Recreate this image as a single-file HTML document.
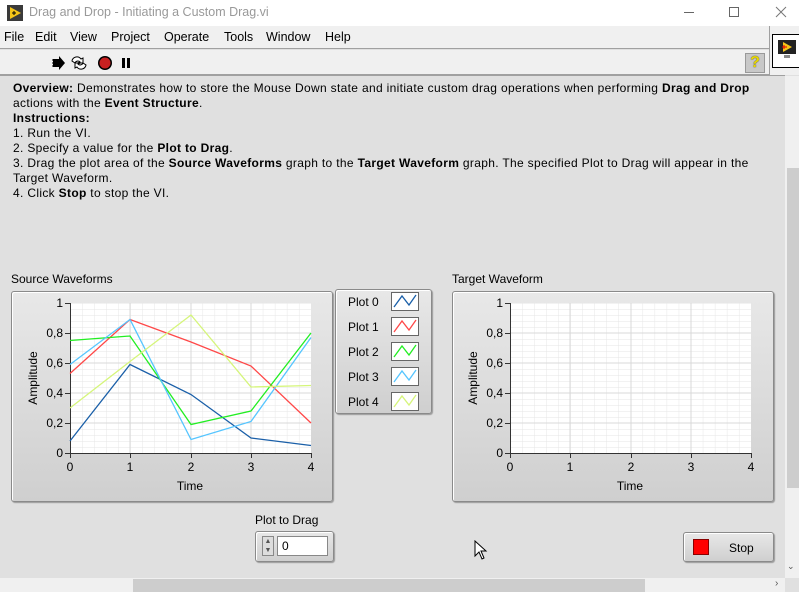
<!DOCTYPE html>
<html><head><meta charset="utf-8"><style>
*{margin:0;padding:0;box-sizing:border-box}
body{width:799px;height:592px;overflow:hidden;background:#e0e0e0;font-family:"Liberation Sans",sans-serif;font-size:12px;color:#000;position:relative}
.abs{position:absolute}
#title{left:0;top:0;width:799px;height:26px;background:#fff}
#menu{left:0;top:26px;width:769px;height:23px;background:#f0f0f0;border-bottom:1px solid #a0a0a0}
#menu span{position:absolute;top:4px;font-size:12.5px}
#tool{left:0;top:50px;width:769px;height:25px;background:#f0f0f0;border-bottom:1px solid #a0a0a0}
.txt{left:13px;top:81px;width:780px;line-height:15px;font-size:12px;letter-spacing:0.33px;white-space:nowrap}
.frame{border:1px solid #8a8a8a;border-radius:3px;background:linear-gradient(#e8e8e8,#cfcfcf);box-shadow:inset 1px 1px 0 #fff,1px 1px 1px #999}
</style></head><body>
<div id="title" class="abs">
 <svg class="abs" style="left:7px;top:5px" width="16" height="16"><rect width="16" height="16" fill="#3a3a3a"/><polygon points="3,2 14,8 3,14" fill="#f5c518"/><path d="M5 8h4M7 6v4" stroke="#000" stroke-width="1"/></svg>
 <div class="abs" style="left:29px;top:5px;color:#999;font-size:12.5px">Drag and Drop - Initiating a Custom Drag.vi</div>
 <div class="abs" style="left:684px;top:12px;width:10px;height:1px;background:#666"></div>
 <div class="abs" style="left:729px;top:7px;width:10px;height:10px;border:1px solid #666"></div>
 <svg class="abs" style="left:775px;top:6px" width="12" height="12"><path d="M1 1L11 11M11 1L1 11" stroke="#777"/></svg>
</div>
<div id="menu" class="abs">
 <span style="left:4px">File</span><span style="left:35px">Edit</span><span style="left:70px">View</span><span style="left:111px">Project</span><span style="left:164px">Operate</span><span style="left:224px">Tools</span><span style="left:266px">Window</span><span style="left:325px">Help</span>
</div>
<div id="tool" class="abs">
 <svg class="abs" style="left:50px;top:4px" width="90" height="18">
  <path d="M3 5h6V2l6 7-6 7v-3H3z" fill="#000"/>
  <path d="M2 6h1M2 9h1M2 12h1" stroke="#000"/>
  <path d="M22 7a5 5 0 0 1 9-2l2-1v5h-5l2-1a3 3 0 0 0-5 1zM36 11a5 5 0 0 1-9 2l-2 1v-5h5l-2 1a3 3 0 0 0 5-1z" fill="#fff" stroke="#000"/>
  <circle cx="55" cy="9" r="7" fill="#000"/><circle cx="55" cy="9" r="5.5" fill="#c82020"/>
  <rect x="72" y="4" width="3" height="10" fill="#000"/><rect x="77" y="4" width="3" height="10" fill="#000"/>
 </svg>
 <div class="abs" style="left:745px;top:3px;width:20px;height:20px;background:#c8c8c8;border:1px solid #999;text-align:center;font-weight:bold;color:#e8d800;font-size:16px;line-height:18px;text-shadow:0 0 1px #000">?</div>
</div>
<div class="abs" style="left:769px;top:26px;width:30px;height:49px;background:#f0f0f0;border-left:1px solid #a0a0a0">
 <div class="abs" style="left:2px;top:8px;width:28px;height:34px;background:#fff;border:1px solid #000"></div>
 <svg class="abs" style="left:8px;top:14px" width="18" height="20"><rect x="0" y="0" width="18" height="14" fill="#222"/><polygon points="5,2 14,7 5,12" fill="#f5c518"/><path d="M4 7h5M6 5v4" stroke="#d00"/><rect x="6" y="15" width="6" height="3" fill="#888"/></svg>
</div>
<div class="abs" style="left:0;top:75px;width:785px;height:1px;background:#a0a0a0"></div>

<div class="abs txt">
<b>Overview:</b> Demonstrates how to store the Mouse Down state and initiate custom drag operations when performing <b>Drag and Drop</b><br>actions with the <b>Event Structure</b>.<br><b>Instructions:</b><br>1. Run the VI.<br>2. Specify a value for the <b>Plot to Drag</b>.<br>3. Drag the plot area of the <b>Source Waveforms</b> graph to the <b>Target Waveform</b> graph. The specified Plot to Drag will appear in the<br>Target Waveform.<br>4. Click <b>Stop</b> to stop the VI.
</div>

<div class="abs" style="left:11px;top:272px">Source Waveforms</div>
<div class="abs" style="left:452px;top:272px">Target Waveform</div>
<div class="abs frame" style="left:11px;top:291px;width:322px;height:211px"></div>
<div class="abs frame" style="left:452px;top:291px;width:322px;height:211px"></div>
<div class="abs frame" style="left:335px;top:289px;width:97px;height:125px"></div>

<svg class="abs" style="left:0;top:0" width="799" height="592" font-family="Liberation Sans" font-size="12">
 <defs>
  <pattern id="g" x="70" y="303" width="12.05" height="6" patternUnits="userSpaceOnUse"><path d="M0 0V6M0 0H12.05" stroke="#e6e6e6" stroke-width="1" fill="none"/></pattern>
  <pattern id="g2" x="510" y="303" width="12.05" height="6" patternUnits="userSpaceOnUse"><path d="M0 0V6M0 0H12.05" stroke="#e6e6e6" stroke-width="1" fill="none"/></pattern>
 </defs>
 <g>
  <rect x="70" y="303" width="241" height="150" fill="#fff"/>
  <rect x="70" y="303" width="241" height="150" fill="url(#g)"/>
  <path d="M130 303V453M191 303V453M251 303V453M70 333H311M70 363H311M70 393H311M70 423H311" stroke="#d8d8d8" fill="none"/>
  <path d="M70.5 303V453.5H311M65 303.5h5M65 333.5h5M65 363.5h5M65 393.5h5M65 423.5h5M65 453.5h5M70.5 453v5M130.5 453v5M191.5 453v5M251.5 453v5M311.5 453v5" stroke="#333" fill="none"/>
  <g text-anchor="end"><text x="63" y="307">1</text><text x="63" y="337">0,8</text><text x="63" y="367">0,6</text><text x="63" y="397">0,4</text><text x="63" y="427">0,2</text><text x="63" y="457">0</text></g>
  <g text-anchor="middle"><text x="70" y="471">0</text><text x="130" y="471">1</text><text x="191" y="471">2</text><text x="251" y="471">3</text><text x="311" y="471">4</text><text x="190" y="490">Time</text></g>
  <text transform="translate(37,378) rotate(-90)" text-anchor="middle">Amplitude</text>
  <g fill="none" stroke-width="1.3">
   <polyline points="70,441 130,364.5 191,394.5 251,438 311,445.5" stroke="#1a5fa8"/>
   <polyline points="70,373.5 130,319.5 191,342 251,366 311,423" stroke="#ff4848"/>
   <polyline points="70,340.5 130,336 191,424.5 251,411 311,333" stroke="#22ee22"/>
   <polyline points="70,364.5 130,319.5 191,439.5 251,421.5 311,337.5" stroke="#55c5ff"/>
   <polyline points="70,408 130,361.5 191,315 251,387 311,385.5" stroke="#d5f57a"/>
  </g>
 </g>
 <g>
  <rect x="510" y="303" width="241" height="150" fill="#fff"/>
  <rect x="510" y="303" width="241" height="150" fill="url(#g2)"/>
  <path d="M570 303V453M631 303V453M691 303V453M510 333H751M510 363H751M510 393H751M510 423H751" stroke="#d8d8d8" fill="none"/>
  <path d="M510.5 303V453.5H751M505 303.5h5M505 333.5h5M505 363.5h5M505 393.5h5M505 423.5h5M505 453.5h5M510.5 453v5M570.5 453v5M631.5 453v5M691.5 453v5M751.5 453v5" stroke="#333" fill="none"/>
  <g text-anchor="end"><text x="503" y="307">1</text><text x="503" y="337">0,8</text><text x="503" y="367">0,6</text><text x="503" y="397">0,4</text><text x="503" y="427">0,2</text><text x="503" y="457">0</text></g>
  <g text-anchor="middle"><text x="510" y="471">0</text><text x="570" y="471">1</text><text x="631" y="471">2</text><text x="691" y="471">3</text><text x="751" y="471">4</text><text x="630" y="490">Time</text></g>
  <text transform="translate(477,378) rotate(-90)" text-anchor="middle">Amplitude</text>
 </g>
 <g>
  <text x="348" y="306">Plot 0</text><text x="348" y="331">Plot 1</text><text x="348" y="356">Plot 2</text><text x="348" y="381">Plot 3</text><text x="348" y="406">Plot 4</text>
  <g stroke="#666" fill="#fff"><rect x="391.5" y="292.5" width="27" height="18"/><rect x="391.5" y="317.5" width="27" height="18"/><rect x="391.5" y="342.5" width="27" height="18"/><rect x="391.5" y="367.5" width="27" height="18"/><rect x="391.5" y="392.5" width="27" height="18"/></g>
  <g fill="none" stroke-width="1.3">
   <polyline points="394,307 402,296 409,305 416,295" stroke="#1a5fa8"/>
   <polyline points="394,332 402,321 409,330 416,320" stroke="#ff4848"/>
   <polyline points="394,357 402,346 409,355 416,345" stroke="#22ee22"/>
   <polyline points="394,382 402,371 409,380 416,370" stroke="#55c5ff"/>
   <polyline points="394,407 402,396 409,405 416,395" stroke="#d5f57a"/>
  </g>
 </g>
</svg>

<div class="abs" style="left:255px;top:513px">Plot to Drag</div>
<div class="abs frame" style="left:255px;top:531px;width:79px;height:31px"></div>
<div class="abs" style="left:262px;top:536px;width:12px;height:20px;border:1px solid #888;background:#ddd;font-size:7px;line-height:9px;text-align:center;color:#555">▲<br>▼</div>
<div class="abs" style="left:277px;top:536px;width:51px;height:20px;border:1px solid #888;background:#fff;padding:2px 4px">0</div>

<div class="abs frame" style="left:683px;top:532px;width:91px;height:30px"></div>
<div class="abs" style="left:693px;top:539px;width:16px;height:16px;background:#f00;border:1px solid #800"></div>
<div class="abs" style="left:729px;top:541px">Stop</div>

<svg class="abs" style="left:474px;top:540px" width="14" height="20"><path d="M1 1V16L5 12L8 19L10 18L7 11H12Z" fill="#fff" stroke="#000"/></svg>

<div class="abs" style="left:785px;top:76px;width:14px;height:502px;background:#f0f0f0"></div>
<div class="abs" style="left:787px;top:168px;width:12px;height:320px;background:#cdcdcd"></div>
<div class="abs" style="left:787px;top:561px;font-size:9px;color:#555">⌄</div>
<div class="abs" style="left:0;top:578px;width:785px;height:14px;background:#f0f0f0"></div>
<div class="abs" style="left:133px;top:579px;width:512px;height:13px;background:#cdcdcd"></div>
<div class="abs" style="left:775px;top:578px;font-size:10px;color:#555">›</div>
</body></html>
